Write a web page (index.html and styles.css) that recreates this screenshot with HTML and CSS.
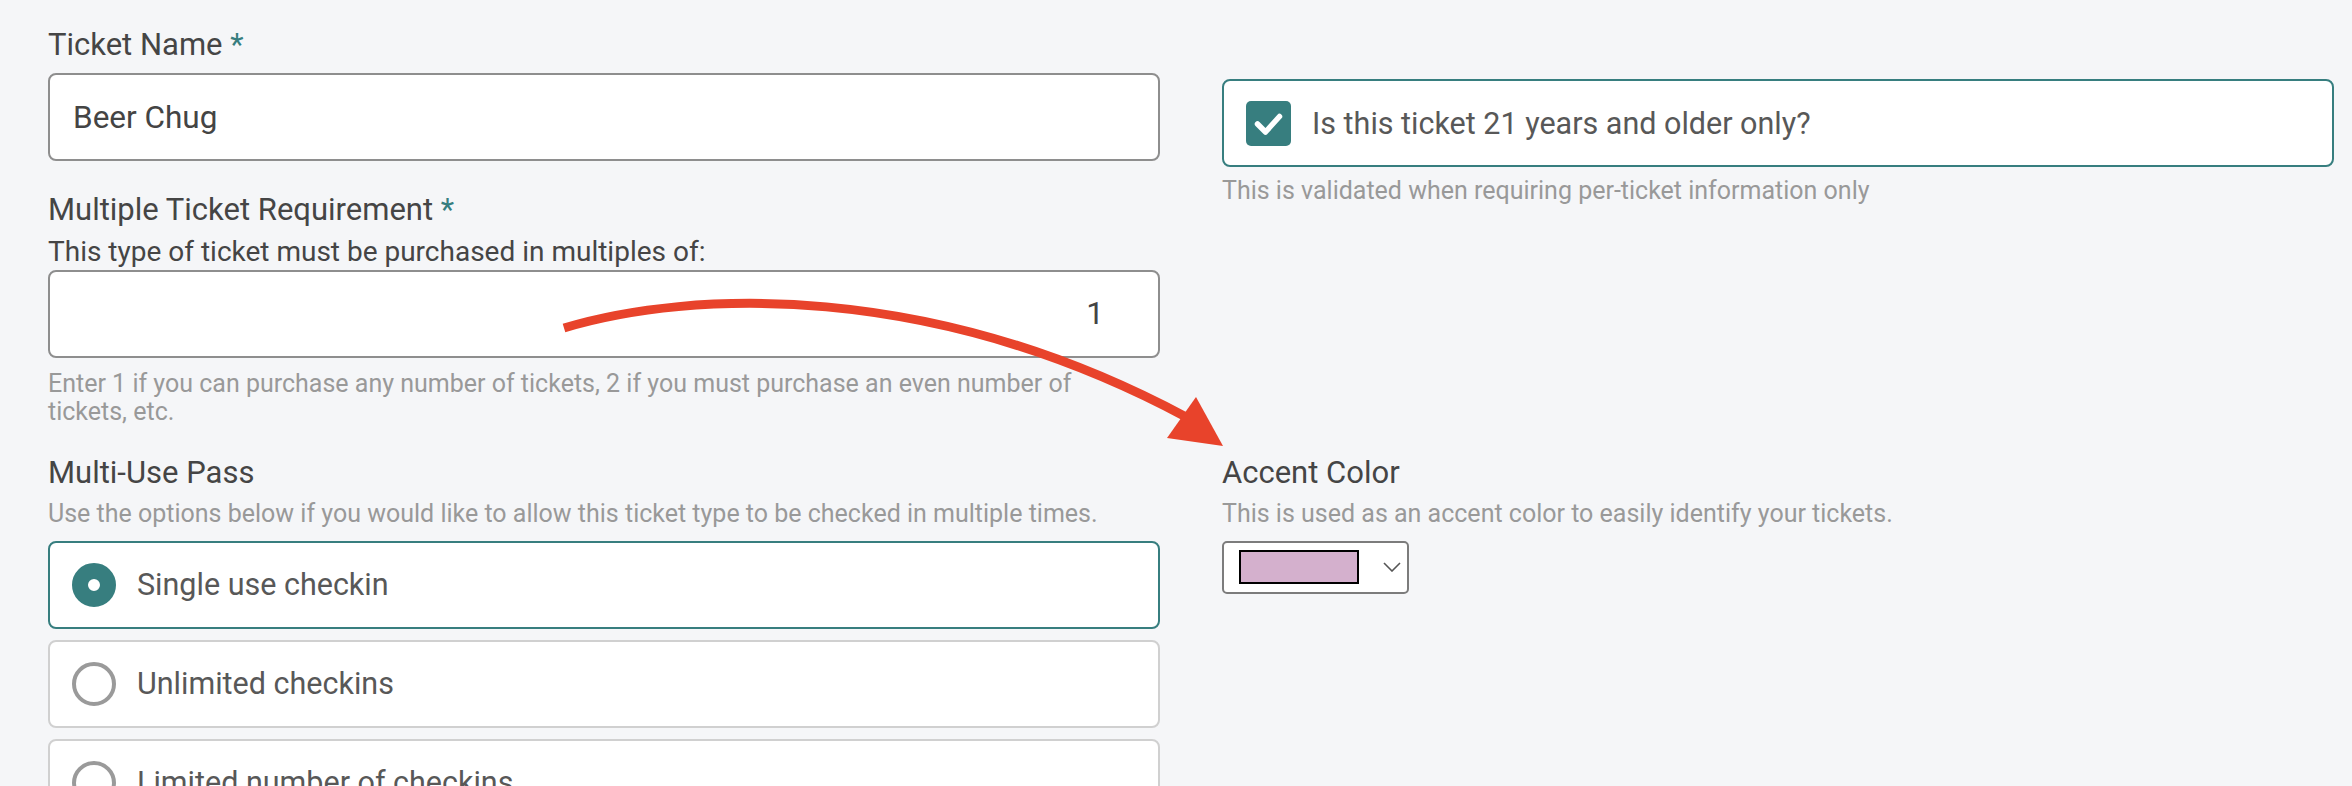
FILE: index.html
```html
<!DOCTYPE html>
<html lang="en">
<head>
<meta charset="utf-8">
<title>Ticket settings</title>
<link rel="stylesheet" href="styles.css">
</head>
<body>
<div class="page">
  <div class="form-grid">
    <div class="col">
      <div class="field">
        <div class="label">Ticket Name <span class="req">*</span></div>
        <div class="input">Beer Chug</div>
      </div>
      <div class="field">
        <div class="label">Multiple Ticket Requirement <span class="req">*</span></div>
        <div class="sublabel">This type of ticket must be purchased in multiples of:</div>
        <div class="input input-num">1</div>
        <div class="help help-wrap">Enter 1 if you can purchase any number of tickets, 2 if you must purchase an even number of tickets, etc.</div>
      </div>
    </div>

    <div class="col col-check">
      <div class="choice-card is-active">
        <span class="checkbox">
          <svg viewBox="0 0 45 45" width="45" height="45"><polyline points="11.5,23 19.5,31 33.5,15.5" fill="none" stroke="#fff" stroke-width="5.5" stroke-linecap="round" stroke-linejoin="round"/></svg>
        </span>
        <span class="choice-text">Is this ticket 21 years and older only?</span>
      </div>
      <div class="help help-check">This is validated when requiring per-ticket information only</div>
    </div>

    <div class="field">
      <div class="label">Multi-Use Pass</div>
      <div class="help help-sub">Use the options below if you would like to allow this ticket type to be checked in multiple times.</div>
      <div class="choices">
        <div class="choice-card is-active">
          <span class="radio radio-on"></span>
          <span class="choice-text">Single use checkin</span>
        </div>
        <div class="choice-card">
          <span class="radio"></span>
          <span class="choice-text">Unlimited checkins</span>
        </div>
        <div class="choice-card">
          <span class="radio"></span>
          <span class="choice-text">Limited number of checkins</span>
        </div>
      </div>
    </div>

    <div class="field">
      <div class="label">Accent Color</div>
      <div class="help help-sub">This is used as an accent color to easily identify your tickets.</div>
      <div class="color-select">
        <span class="swatch"></span>
        <svg class="chevron" viewBox="0 0 18 10" width="18" height="10"><polyline points="1,1 9,9 17,1" fill="none" stroke="#555" stroke-width="1.6"/></svg>
      </div>
    </div>
  </div>

  <svg class="annotation" viewBox="0 0 2352 786" width="2352" height="786">
    <path d="M564 328 C690 290 930 280 1186 417" fill="none" stroke="#e8432b" stroke-width="9"/>
    <polygon points="1196,397 1167,438 1223,446" fill="#e8432b"/>
  </svg>
</div>
</body>
</html>
```

FILE: styles.css
```css
html {
  overflow: hidden;
}
body {
  margin: 0;
  background: #f5f6f8;
  font-family: Roboto, "Liberation Sans", Arial, sans-serif;
  color: #444;
}
.page {
  position: relative;
  min-height: 786px;
  padding: 26px 18px 0 48px;
}
.form-grid {
  display: grid;
  grid-template-columns: 1fr 1fr;
  column-gap: 62px;
  row-gap: 28px;
  align-items: start;
}
.col {
  display: flex;
  flex-direction: column;
  gap: 30px;
}
.col-check {
  gap: 0;
  padding-top: 53px;
}
.field {
  display: flex;
  flex-direction: column;
}
.label {
  font-size: 31px;
  line-height: normal;
  color: #454545;
  margin-bottom: 10px;
}
.req {
  color: #377e7f;
}
.sublabel {
  font-size: 28px;
  line-height: normal;
  color: #454545;
  margin-top: -3.5px;
  margin-bottom: 2px;
}
.input {
  box-sizing: border-box;
  height: 88px;
  display: flex;
  align-items: center;
  padding: 0 23px;
  background: #fff;
  border: 2px solid #8e8e8e;
  border-radius: 8px;
  font-size: 31.5px;
  color: #444;
}
.input-num {
  justify-content: flex-end;
  padding-right: 54px;
}
.help {
  font-size: 25px;
  line-height: 28px;
  color: #999;
}
.help-wrap {
  margin-top: 12px;
  padding-right: 40px;
}
.help-check {
  margin-top: 9.5px;
}
.help-sub {
  margin-top: -1px;
}
.choices {
  display: flex;
  flex-direction: column;
  gap: 11px;
  margin-top: 13px;
}
.choice-card {
  box-sizing: border-box;
  height: 88px;
  display: flex;
  align-items: center;
  gap: 21px;
  padding: 0 22px;
  background: #fff;
  border: 2px solid #d0d0d0;
  border-radius: 8px;
}
.choice-card.is-active {
  border-color: #377e7f;
}
.choice-text {
  font-size: 30.5px;
  color: #585858;
}
.checkbox {
  width: 45px;
  height: 45px;
  border-radius: 5px;
  background: #377e7f;
  display: flex;
  flex: none;
}
.radio {
  box-sizing: border-box;
  width: 44px;
  height: 44px;
  flex: none;
  border-radius: 50%;
  border: 4px solid #9a9a9a;
  background: #fff;
}
.radio-on {
  border: 16px solid #377e7f;
  background: #fff;
}
.color-select {
  box-sizing: border-box;
  width: 187px;
  height: 53px;
  margin-top: 13px;
  display: flex;
  align-items: center;
  padding-left: 15px;
  background: #fff;
  border: 2px solid #7c7c7c;
  border-radius: 5px;
}
.swatch {
  box-sizing: border-box;
  width: 120px;
  height: 34px;
  background: #d4b0cd;
  border: 2.5px solid #000;
}
.chevron {
  margin-left: 24px;
}
.annotation {
  position: absolute;
  top: 0;
  left: 0;
  pointer-events: none;
}
```
